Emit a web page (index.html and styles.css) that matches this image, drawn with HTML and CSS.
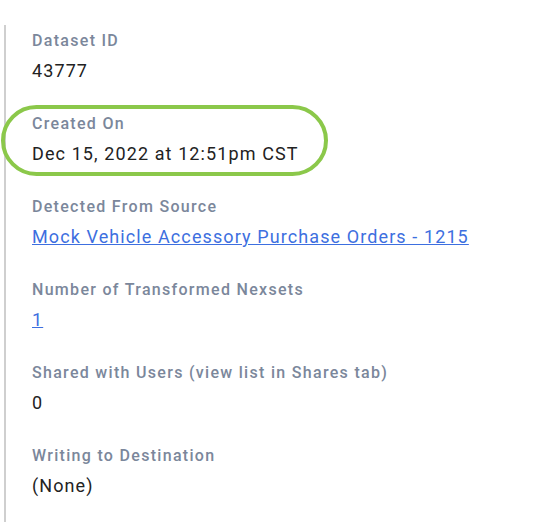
FILE: index.html
```html
<!DOCTYPE html>
<html lang="en">
<head>
    <meta charset="UTF-8">
    <meta name="viewport" content="width=device-width, initial-scale=1.0">
    <title>Dataset Details</title>
    <link rel="stylesheet" href="styles.css">
</head>
<body>
    <div class="details">
        <div class="field">
            <div class="label">Dataset ID</div>
            <div class="value">43777</div>
        </div>
        <div class="field highlight">
            <div class="label">Created On</div>
            <div class="value">Dec 15, 2022 at 12:51pm CST</div>
        </div>
        <div class="field">
            <div class="label">Detected From Source</div>
            <div class="value"><a href="#">Mock Vehicle Accessory Purchase Orders - 1215</a></div>
        </div>
        <div class="field">
            <div class="label">Number of Transformed Nexsets</div>
            <div class="value"><a href="#">1</a></div>
        </div>
        <div class="field">
            <div class="label">Shared with Users (view list in Shares tab)</div>
            <div class="value">0</div>
        </div>
        <div class="field">
            <div class="label">Writing to Destination</div>
            <div class="value">(None)</div>
        </div>
    </div>
</body>
</html>
```

FILE: styles.css
```css
body {
    margin: 0;
    background: #fff;
    font-family: Roboto, "Liberation Sans", sans-serif;
    overflow: hidden;
}
.details {
    position: relative;
    margin: 25px 0 0 4px;
    padding: 4px 0 0 26px;
    border-left: 2px solid #cfcfcf;
    min-height: 497px;
    box-sizing: border-box;
}
.field {
    position: relative;
    margin-bottom: 27px;
}
.label {
    font-size: 16px;
    line-height: 24px;
    font-weight: 500;
    letter-spacing: 1.3px;
    color: #7b879b;
    margin-bottom: 4px;
}
.value {
    font-size: 18px;
    line-height: 28px;
    letter-spacing: 1.1px;
    color: #222;
}
.value a {
    color: #3d6fe0;
    text-decoration: underline;
}
/* annotation ring around the field */
.highlight::before {
    content: "";
    position: absolute;
    left: -31px;
    top: -7px;
    width: 327px;
    height: 71px;
    box-sizing: border-box;
    border: 4px solid #8bc84a;
    border-radius: 36px;
}
```
